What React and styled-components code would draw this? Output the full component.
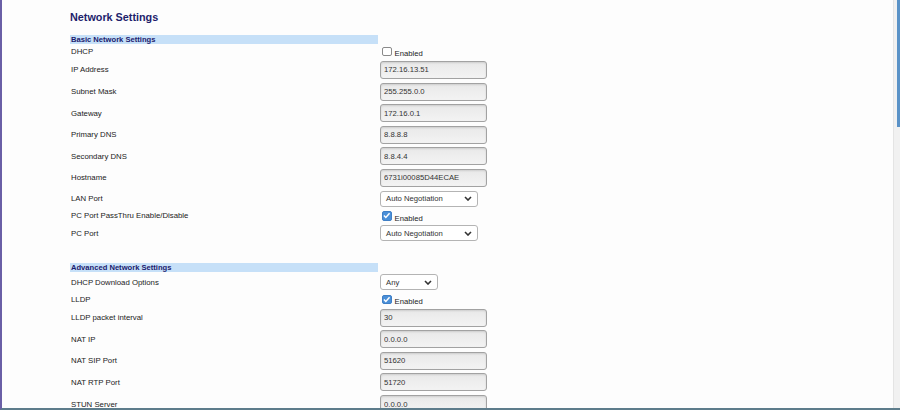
import React from 'react'
import styled, { createGlobalStyle } from 'styled-components'

const basic = [
  { label: 'DHCP', type: 'check', checked: false },
  { label: 'IP Address', type: 'text', value: '172.16.13.51' },
  { label: 'Subnet Mask', type: 'text', value: '255.255.0.0' },
  { label: 'Gateway', type: 'text', value: '172.16.0.1' },
  { label: 'Primary DNS', type: 'text', value: '8.8.8.8' },
  { label: 'Secondary DNS', type: 'text', value: '8.8.4.4' },
  { label: 'Hostname', type: 'text', value: '6731i00085D44ECAE' },
  { label: 'LAN Port', type: 'select', value: 'Auto Negotiation', width: 98 },
  { label: 'PC Port PassThru Enable/Disable', type: 'check', checked: true },
  { label: 'PC Port', type: 'select', value: 'Auto Negotiation', width: 98 },
]

const advanced = [
  { label: 'DHCP Download Options', type: 'select', value: 'Any', width: 58 },
  { label: 'LLDP', type: 'check', checked: true },
  { label: 'LLDP packet interval', type: 'text', value: '30' },
  { label: 'NAT IP', type: 'text', value: '0.0.0.0' },
  { label: 'NAT SIP Port', type: 'text', value: '51620' },
  { label: 'NAT RTP Port', type: 'text', value: '51720' },
  { label: 'STUN Server', type: 'text', value: '0.0.0.0' },
]

const Field = ({ item }) => {
  if (item.type === 'check') {
    return (
      <CheckWrap>
        <Box $on={item.checked}>
          {item.checked && (
            <svg width="8" height="7" viewBox="0 0 8 7">
              <path d="M1 3.6 L3 5.6 L7 1.2" fill="none" stroke="#fff" strokeWidth="1.6" />
            </svg>
          )}
        </Box>
        <CheckText>Enabled</CheckText>
      </CheckWrap>
    )
  }
  if (item.type === 'select') {
    return (
      <SelectBox $w={item.width}>
        <span>{item.value}</span>
        <svg width="8" height="5" viewBox="0 0 8 5">
          <path d="M1 1 L4 4 L7 1" fill="none" stroke="#333" strokeWidth="1.6" />
        </svg>
      </SelectBox>
    )
  }
  return <TextInput readOnly value={item.value} />
}

const Section = ({ title, rows }) => (
  <>
    <Row>
      <SectionHead>{title}</SectionHead>
      <div />
    </Row>
    {rows.map((item) => (
      <Row key={item.label} $check={item.type === 'check'}>
        <Label>{item.label}</Label>
        <div><Field item={item} /></div>
      </Row>
    ))}
  </>
)

export default function App() {
  return (
    <>
      <GlobalStyle />
      <Frame>
        <Content>
          <Title>Network Settings</Title>
          <Section title="Basic Network Settings" rows={basic} />
          <Spacer />
          <Section title="Advanced Network Settings" rows={advanced} />
        </Content>
        <Track>
          <Thumb />
        </Track>
      </Frame>
    </>
  )
}

const GlobalStyle = createGlobalStyle`
  html, body { margin: 0; padding: 0; background: #fdfdfd; }
  body { font-family: "Liberation Sans", Arial, sans-serif; }
`

const Frame = styled.div`
  display: flex;
  width: 900px;
  height: 410px;
  box-sizing: border-box;
  border-left: 2px solid #6a5fa6;
  border-bottom: 2px solid #5d7c8b;
  background: #fdfdfd;
  overflow: hidden;
`

const Content = styled.main`
  flex: 1;
  padding: 11px 0 0 68px;
  overflow: hidden;
`

const Title = styled.h1`
  margin: 0 0 11.7px;
  font-size: 10.8px;
  line-height: 12px;
  font-weight: bold;
  color: #1e1e6c;
`

const Row = styled.div`
  display: grid;
  grid-template-columns: 308px 1fr;
  column-gap: 2px;
  align-items: center;
  min-height: ${(p) => (p.$check ? '15px' : '0')};
`

const SectionHead = styled.div`
  height: 9.5px;
  line-height: 9.5px;
  padding-left: 1px;
  background: #c6e0f8;
  color: #1b1b6e;
  font-size: 7.6px;
  font-weight: bold;
`

const Label = styled.div`
  padding-left: 1px;
  font-size: 7.8px;
  color: #222;
`

const TextInput = styled.input`
  display: block;
  box-sizing: border-box;
  width: 107px;
  height: 18px;
  margin: 1.8px 0;
  padding: 0 3px;
  border: 1.3px solid #a2a2a2;
  border-radius: 3px;
  background: linear-gradient(#e9e9e9, #f3f3f3);
  box-shadow: inset 0 1px 2px rgba(0, 0, 0, 0.12);
  font-family: "Liberation Sans", Arial, sans-serif;
  font-size: 7.7px;
  color: #333;
  outline: none;
`

const SelectBox = styled.div`
  display: flex;
  align-items: center;
  justify-content: space-between;
  box-sizing: border-box;
  width: ${(p) => p.$w}px;
  height: 16px;
  margin: 1.8px 0;
  padding: 0 5px 0 5px;
  border: 1px solid #b4b4b4;
  border-radius: 3px;
  background: #fff;
  font-size: 7.7px;
  color: #333;
`

const CheckWrap = styled.div`
  display: flex;
  align-items: flex-end;
  padding-left: 2px;
`

const Box = styled.span`
  display: flex;
  align-items: center;
  justify-content: center;
  box-sizing: border-box;
  width: 9.5px;
  height: 9.5px;
  border-radius: 2px;
  border: 1px solid ${(p) => (p.$on ? '#3f7fc6' : '#8a8a8a')};
  background: ${(p) => (p.$on ? '#4a8fd8' : '#fff')};
`

const CheckText = styled.span`
  margin-left: 3px;
  font-size: 7.7px;
  line-height: 8px;
  color: #222;
  transform: translateY(1.5px);
`

const Spacer = styled.div`
  height: 19.8px;
`

const Track = styled.aside`
  width: 7px;
  box-sizing: border-box;
  padding-left: 3px;
  background: #f1f1f1;
  border-left: 1px solid #e4e4e4;
`

const Thumb = styled.div`
  height: 127px;
  background: #5a92c7;
`
